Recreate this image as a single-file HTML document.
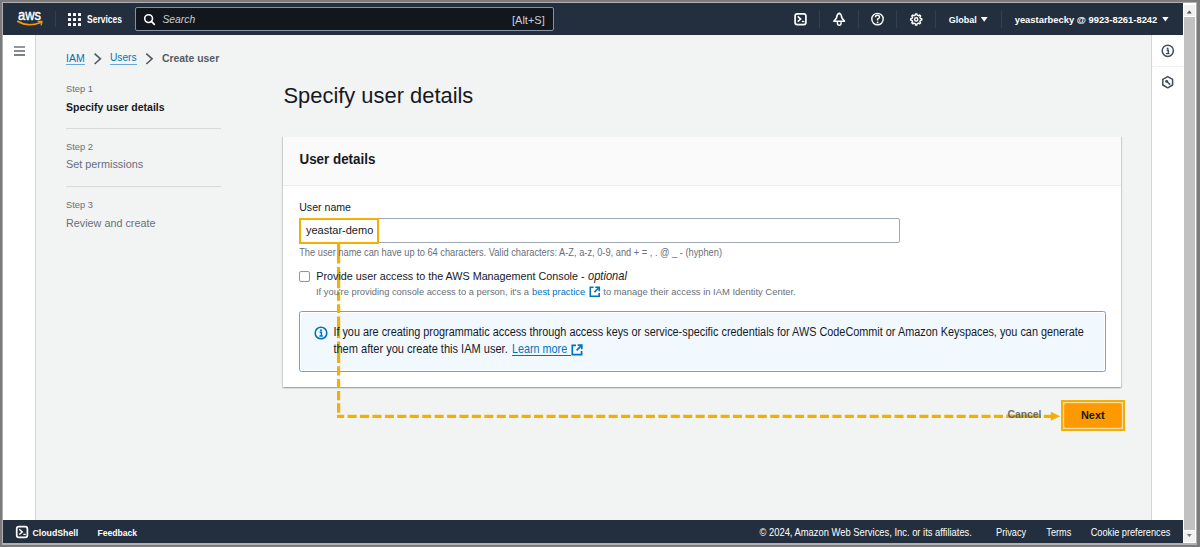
<!DOCTYPE html>
<html><head><meta charset="utf-8">
<style>
*{box-sizing:border-box;margin:0;padding:0}
html,body{width:1200px;height:547px;overflow:hidden}
body{background:#7b7b7d;position:relative;font-family:"Liberation Sans",sans-serif;color:#16191f}
.a{position:absolute}
.t{position:absolute;white-space:nowrap;line-height:0;z-index:2}
.hdr{left:3px;top:3px;width:1180px;height:32px;background:#232f3e}
.ftr{left:3px;top:520px;width:1180px;height:23px;background:#232f3e}
.wt{color:#fff;font-weight:bold}
.div{position:absolute;width:1px;background:#343f4e;top:10px;height:18px}
a{color:#0073bb}
</style></head><body>
<!-- frame -->
<div class="a" style="left:2px;top:2px;width:1195px;height:542.5px;background:#b0afad"></div>
<div class="a" style="left:3px;top:3px;width:1193px;height:540px;background:#f2f3f3"></div>
<!-- scrollbar -->
<div class="a" style="left:1183px;top:3px;width:13px;height:540px;background:#fff"></div>
<div class="a" style="left:1184px;top:5px;width:11px;height:11px;background:#f0f0f0"></div>
<div class="a" style="left:1184.2px;top:17px;width:10.8px;height:513px;background:#c1c1c1"></div>
<div class="a" style="left:1184px;top:531px;width:11px;height:11px;background:#f0f0f0"></div>
<svg class="a" style="left:1183px;top:3px" width="13" height="540"><path d="M3.8 10.5 L6.3 7.5 L8.8 10.5Z" fill="#505050"/><path d="M3.8 531 L6.3 534 L8.8 531Z" fill="#7a7a7a"/></svg>

<!-- left nav -->
<div class="a" style="left:3px;top:35px;width:33px;height:485px;background:#fff;border-right:1px solid #d3d5d9"></div>
<svg class="a" style="left:13px;top:45px" width="14" height="12"><g stroke-width="1.4"><line x1="1" y1="2" x2="12" y2="2" stroke="#666c75"/><line x1="1" y1="6" x2="12" y2="6" stroke="#545b66"/><line x1="1" y1="10" x2="12" y2="10" stroke="#3f4a5a"/></g></svg>

<!-- right panel -->
<div class="a" style="left:1151px;top:35px;width:32px;height:485px;background:#fff;border-left:1px solid #d3d5d9"></div>
<svg class="a" style="left:1152px;top:35px" width="31" height="65">
 <circle cx="15.8" cy="15.8" r="5.6" fill="none" stroke="#414d5c" stroke-width="1.5"/>
 <circle cx="15.6" cy="13.5" r="1" fill="#414d5c"/>
 <path d="M14.7 15.2 H16.3 V18.4" fill="none" stroke="#414d5c" stroke-width="1.5"/><path d="M13.9 18.6 H17.5" fill="none" stroke="#414d5c" stroke-width="1.2"/>
 <line x1="0" y1="31.5" x2="31" y2="31.5" stroke="#e8eaec" stroke-width="1" stroke-dasharray="2 1"/>
 <path d="M15.7 41.6 L20.6 44.4 V50 L15.7 52.8 L10.8 50 V44.4 Z" fill="none" stroke="#414d5c" stroke-width="1.5" stroke-linejoin="round"/>
 <circle cx="14.6" cy="46.3" r="1.5" fill="#414d5c"/>
 <line x1="15" y1="46.7" x2="18.2" y2="49.6" stroke="#414d5c" stroke-width="1.5"/>
</svg>

<!-- header -->
<div class="a hdr"></div>
<svg class="a" style="left:15px;top:8px" width="32" height="22">
 <text x="3" y="11.6" font-family="Liberation Sans" font-size="13" fill="#fff" stroke="#fff" stroke-width="0.35" transform="translate(0 11.6) scale(1 1.18) translate(0 -11.6)" letter-spacing="0">aws</text>
 <path d="M2.6 13.3 Q13 19.6 25.6 14.4" fill="none" stroke="#ff9900" stroke-width="1.6" stroke-linecap="round"/>
 <path d="M23.2 13.3 L27 13.5 L26.2 16.8" fill="none" stroke="#ff9900" stroke-width="1.3" stroke-linecap="round" stroke-linejoin="round"/>
</svg>
<div class="div" style="left:55px;top:11px;height:16px"></div>
<svg class="a" style="left:68px;top:13px" width="13" height="13"><g fill="#fff">
<rect x="0" y="0" width="3" height="3" rx="0.5"/><rect x="5" y="0" width="3" height="3" rx="0.5"/><rect x="10" y="0" width="3" height="3" rx="0.5"/>
<rect x="0" y="5" width="3" height="3" rx="0.5"/><rect x="5" y="5" width="3" height="3" rx="0.5"/><rect x="10" y="5" width="3" height="3" rx="0.5"/>
<rect x="0" y="10" width="3" height="3" rx="0.5"/><rect x="5" y="10" width="3" height="3" rx="0.5"/><rect x="10" y="10" width="3" height="3" rx="0.5"/></g></svg>
<div class="t wt" style="left:87px;top:20px;font-size:8.5px;transform-origin:0 0.3465em;transform:scaleY(1.2)">Services</div>

<div class="a" style="left:135px;top:7px;width:419px;height:24px;background:#12171e;border:1px solid #8592a2;border-radius:2px"></div>
<svg class="a" style="left:143px;top:13px" width="13" height="13"><circle cx="5.6" cy="5.6" r="3.9" fill="none" stroke="#fff" stroke-width="1.6"/><line x1="8.4" y1="8.4" x2="11.3" y2="11.3" stroke="#fff" stroke-width="1.7" stroke-linecap="round"/></svg>
<div class="t" style="left:162.5px;top:20px;font-size:10.3px;font-style:italic;color:#c9cfd6">Search</div>
<div class="t" style="left:512px;top:20px;font-size:11px;color:#c9cfd6">[Alt+S]</div>

<svg class="a" style="left:790px;top:8px" width="140" height="22">
 <rect x="5.1" y="5.8" width="10.8" height="10.8" rx="2.2" fill="none" stroke="#fff" stroke-width="1.7"/>
 <path d="M7.7 8.4 L10.7 11.1 L7.7 13.6" fill="none" stroke="#fff" stroke-width="1.5"/>
 <line x1="11.9" y1="13.5" x2="14.3" y2="13.5" stroke="#fff" stroke-width="1.3"/>
 <path d="M49.2 5.1 C47.6 5.9 46.7 7.5 46.5 10 L43.9 13.3 H54.5 L51.9 10 C51.7 7.5 50.8 5.9 49.2 5.1 Z" fill="none" stroke="#fff" stroke-width="1.6" stroke-linejoin="round"/>
 <path d="M47.4 13.8 V15.3 Q47.4 17.3 49.25 17.3 Q51.1 17.3 51.1 15.3 V13.8" fill="none" stroke="#fff" stroke-width="1.4"/>
 <circle cx="87.5" cy="11.1" r="5.7" fill="none" stroke="#fff" stroke-width="1.4"/>
 <path d="M85.5 9.3 Q85.5 7.2 87.5 7.2 Q89.5 7.2 89.5 9.1 Q89.5 10.4 87.6 11.1 V12.6" fill="none" stroke="#fff" stroke-width="1.4"/>
 <circle cx="87.6" cy="14.4" r="0.9" fill="#fff"/>
 <g transform="translate(126.2 11.4)">
 <path d="M4.20 -0.94 L5.55 -0.73 L5.55 0.73 L4.20 0.94 L3.63 2.30 L4.44 3.41 L3.41 4.44 L2.30 3.63 L0.94 4.20 L0.73 5.55 L-0.73 5.55 L-0.94 4.20 L-2.30 3.63 L-3.41 4.44 L-4.44 3.41 L-3.63 2.30 L-4.20 0.94 L-5.55 0.73 L-5.55 -0.73 L-4.20 -0.94 L-3.63 -2.30 L-4.44 -3.41 L-3.41 -4.44 L-2.30 -3.63 L-0.94 -4.20 L-0.73 -5.55 L0.73 -5.55 L0.94 -4.20 L2.30 -3.63 L3.41 -4.44 L4.44 -3.41 L3.63 -2.30Z" fill="none" stroke="#fff" stroke-width="1.4" stroke-linejoin="round"/>
 <circle cx="0" cy="0" r="1.6" fill="none" stroke="#fff" stroke-width="1.4"/>
 </g>
</svg>
<div class="div" style="left:819px"></div>
<div class="div" style="left:858px"></div>
<div class="div" style="left:896px"></div>
<div class="div" style="left:935px"></div>
<div class="div" style="left:1001px"></div>
<div class="t wt" style="left:948.7px;top:20px;font-size:9px;transform-origin:0 0.3465em;transform:scaleY(1.08)">Global</div>
<svg class="a" style="left:980px;top:16px" width="9" height="7"><path d="M0.8 1 H7.6 L4.2 5.8Z" fill="#fff"/></svg>
<div class="t wt" style="left:1014.7px;top:20px;font-size:9.4px;transform-origin:0 0.3465em;transform:scaleY(1.03)">yeastarbecky @ 9923-8261-8242</div>
<svg class="a" style="left:1161px;top:16px" width="9" height="7"><path d="M1.2 1 H7.6 L4.4 5.6Z" fill="#fff"/></svg>

<!-- footer -->
<div class="a ftr"></div>
<svg class="a" style="left:15px;top:524.5px" width="14" height="14"><rect x="1.7" y="1.7" width="10.7" height="10.7" rx="2.2" fill="none" stroke="#fff" stroke-width="1.7"/><path d="M4.3 4.3 L7.2 7 L4.3 9.5" fill="none" stroke="#fff" stroke-width="1.5"/><line x1="8.4" y1="9.4" x2="10.8" y2="9.4" stroke="#fff" stroke-width="1.3"/></svg>
<div class="t wt" style="left:32.5px;top:533px;font-size:8.75px;transform-origin:0 0.3465em;transform:scaleY(1.1)">CloudShell</div>
<div class="t wt" style="left:97.5px;top:533px;font-size:8.6px;transform-origin:0 0.3465em;transform:scaleY(1.1)">Feedback</div>
<div class="t wt" style="left:759.5px;top:533px;font-size:9.4px;font-weight:normal;transform-origin:0 0.3465em;transform:scaleY(1.12)">© 2024, Amazon Web Services, Inc. or its affiliates.</div>
<div class="t wt" style="left:996px;top:533px;font-size:9.2px;font-weight:normal;transform-origin:0 0.3465em;transform:scaleY(1.1)">Privacy</div>
<div class="t wt" style="left:1046.3px;top:533px;font-size:9.2px;font-weight:normal;transform-origin:0 0.3465em;transform:scaleY(1.1)">Terms</div>
<div class="t wt" style="left:1090.7px;top:533px;font-size:9.2px;font-weight:normal;transform-origin:0 0.3465em;transform:scaleY(1.1)">Cookie preferences</div>

<!-- breadcrumbs -->
<div class="t" style="left:66px;top:58px;font-size:10.5px;color:#0073bb;transform-origin:0 0.3465em;transform:scaleY(1.07)">IAM</div>
<div class="t" style="left:110px;top:58px;font-size:10.2px;color:#0073bb;transform-origin:0 0.3465em;transform:scaleY(1.07)">Users</div>
<div class="a" style="left:66px;top:64.2px;width:19px;height:1.2px;background:#6aa8dc"></div>
<div class="a" style="left:110px;top:64.2px;width:27px;height:1.2px;background:#6aa8dc"></div>
<svg class="a" style="left:92px;top:52px" width="64" height="14"><path d="M2.6 1.6 L8.4 6.8 L2.6 12" fill="none" stroke="#545b64" stroke-width="1.6"/><path d="M54.3 1.6 L60.1 6.8 L54.3 12" fill="none" stroke="#545b64" stroke-width="1.6"/></svg>
<div class="t" style="left:162px;top:58.6px;font-size:10.4px;color:#545b64;font-weight:bold;transform-origin:0 0.3465em;transform:scaleY(1.07)">Create user</div>

<!-- steps -->
<div class="t" style="left:66px;top:89px;font-size:9.3px;color:#687078;transform-origin:0 0.3465em;transform:scaleY(1.03)">Step 1</div>
<div class="t" style="left:66px;top:106.5px;font-size:10.5px;font-weight:bold;color:#16191f;transform-origin:0 0.3465em;transform:scaleY(1.05)">Specify user details</div>
<div class="a" style="left:66px;top:128px;width:155px;height:1px;background:#d5dbdb"></div>
<div class="t" style="left:66px;top:146.6px;font-size:9.3px;color:#687078;transform-origin:0 0.3465em;transform:scaleY(1.03)">Step 2</div>
<div class="t" style="left:66px;top:164.3px;font-size:10.85px;color:#687078;transform-origin:0 0.3465em;transform:scaleY(1.08)">Set permissions</div>
<div class="a" style="left:66px;top:186px;width:155px;height:1px;background:#d5dbdb"></div>
<div class="t" style="left:66px;top:204.8px;font-size:9.3px;color:#687078;transform-origin:0 0.3465em;transform:scaleY(1.03)">Step 3</div>
<div class="t" style="left:66px;top:223px;font-size:10.8px;color:#687078;transform-origin:0 0.3465em;transform:scaleY(1.08)">Review and create</div>

<!-- heading -->
<div class="t" style="left:283.5px;top:96.3px;font-size:21.9px;color:#16191f">Specify user details</div>

<!-- panel -->
<div class="a" style="left:283px;top:136px;width:838px;height:251px;background:#fff;box-shadow:0 1px 1.5px 0 rgba(0,28,36,.25),1px 1px 1px 0 rgba(0,28,36,.1),-1px 1px 1px 0 rgba(0,28,36,.1);border-top:1px solid #f3f4f4"></div>
<div class="a" style="left:283px;top:137px;width:838px;height:49px;background:#fafafa;border-bottom:1px solid #eaeded"></div>
<div class="t" style="left:299.5px;top:159.5px;font-size:13.4px;font-weight:bold;color:#16191f;transform-origin:0 0.3465em;transform:scaleY(1.08)">User details</div>
<div class="t" style="left:299.2px;top:206.5px;font-size:10.6px;color:#16191f">User name</div>
<div class="a" style="left:299px;top:218px;width:601px;height:25.4px;background:#fff;border:1px solid #9ea9b6;border-bottom-width:1.3px;border-radius:2px"></div>
<div class="t" style="left:306px;top:230px;font-size:11px;color:#16191f;transform-origin:0 0.3465em;transform:scaleY(1.05)">yeastar-demo</div>
<div class="t" style="left:299.2px;top:252.5px;font-size:9.27px;color:#687078;transform-origin:0 0.3465em;transform:scaleY(1.1)">The user name can have up to 64 characters. Valid characters: A-Z, a-z, 0-9, and + = , . @ _ - (hyphen)</div>
<div class="a" style="left:299px;top:271px;width:11px;height:11px;border:1.3px solid #8c96a5;border-radius:2px;background:#fff"></div>
<div class="t" style="left:316.3px;top:275.8px;font-size:10.77px;color:#16191f;transform-origin:0 0.3465em;transform:scaleY(1.1)">Provide user access to the AWS Management Console -</div>
<div class="t" style="left:588px;top:275.8px;font-size:11.1px;font-style:italic;color:#16191f;transform-origin:0 0.3465em;transform:scaleY(1.08)">optional</div>
<div class="t" style="left:316px;top:291.5px;font-size:9.33px;color:#687078">If you're providing console access to a person, it's a</div>
<div class="t" style="left:532px;top:291.5px;font-size:9.38px;color:#0073bb">best practice</div>
<svg class="a" style="left:589px;top:286px" width="12" height="12"><path d="M4.6 1.3 H1.3 V10.2 H10.2 V6.9" fill="none" stroke="#0073bb" stroke-width="1.6"/><path d="M6.3 1.2 H10.3 V5.2 M10.3 1.2 L5.4 6.1" fill="none" stroke="#0073bb" stroke-width="1.6"/></svg>
<div class="t" style="left:603.3px;top:291.5px;font-size:9.41px;color:#687078">to manage their access in IAM Identity Center.</div>

<div class="a" style="left:298.5px;top:310.5px;width:807.5px;height:61.5px;background:#f1f9ff;border:1.4px solid #62a8dc;border-radius:2.5px;box-shadow:inset 0 0 0 1px #fff"></div>
<svg class="a" style="left:313px;top:325px" width="16" height="16"><circle cx="8" cy="8" r="5.8" fill="none" stroke="#0073bb" stroke-width="1.6"/><circle cx="8" cy="5.2" r="1" fill="#0073bb"/><path d="M6.6 7.3 H8.4 V11 M6.4 11 H9.8" fill="none" stroke="#0073bb" stroke-width="1.5"/></svg>
<div class="t" style="left:333.4px;top:331.8px;font-size:10.87px;color:#16191f;transform-origin:0 0.3465em;transform:scaleY(1.15)">If you are creating programmatic access through access keys or service-specific credentials for AWS CodeCommit or Amazon Keyspaces, you can generate</div>
<div class="t" style="left:333.4px;top:349.2px;font-size:11.06px;color:#16191f;transform-origin:0 0.3465em;transform:scaleY(1.1)">them after you create this IAM user.</div>
<div class="t" style="left:512px;top:349.2px;font-size:10.8px;color:#0073bb;transform-origin:0 0.3465em;transform:scaleY(1.1)">Learn more</div>
<div class="a" style="left:512px;top:354.6px;width:58.5px;height:1px;background:#0073bb"></div>
<svg class="a" style="left:571px;top:343.5px" width="13" height="12"><path d="M5 1.3 H1.3 V10.6 H10.6 V7" fill="none" stroke="#0073bb" stroke-width="1.7"/><path d="M6.7 1.2 H10.8 V5.3 M10.8 1.2 L5.7 6.3" fill="none" stroke="#0073bb" stroke-width="1.7"/></svg>

<!-- buttons -->
<div class="t" style="z-index:4;opacity:.85;left:1007.5px;top:415px;font-size:10.3px;font-weight:bold;color:#545b64;transform-origin:0 0.3465em;transform:scaleY(1.1)">Cancel</div>
<div class="a" style="left:1063.5px;top:402.5px;width:58.5px;height:25.6px;background:#ff9900;border-radius:2px"></div>
<div class="t" style="left:1081px;top:414.5px;font-size:10.9px;font-weight:bold;color:#16191f">Next</div>

<!-- annotations -->
<div class="a" style="left:298.5px;top:217.5px;width:80px;height:26px;border:2.5px solid #f4af05"></div>
<div class="a" style="left:1061px;top:400px;width:64px;height:31px;border:2.6px solid #f4af05;box-shadow:inset 0 0 0 1.5px rgba(240,200,100,.55)"></div>
<svg class="a" style="left:0;top:0;z-index:1" width="1200" height="547">
 <path d="M338.6 243.3 V263.6 M338.6 267.1 V288.3 M338.6 292 V300.8 M338.6 304.3 V313.1 M338.6 316.4 V338.3 M338.6 341.5 V362.9 M338.6 366.3 V375.6 M338.6 378.9 V387.9 M338.6 391 V400.2 M338.6 403.2 V412.7" fill="none" stroke="#f4af05" stroke-width="3.2"/>
</svg>
<svg class="a" style="left:0;top:0;z-index:3" width="1200" height="547">
 <path d="M337 416.3 H1052" fill="none" stroke="#f4af05" stroke-width="3.3" stroke-dasharray="9 3.43" stroke-dashoffset="1.8"/>
 <path d="M1006.4 416.3 H1040.3" fill="none" stroke="#f4af05" stroke-width="3.3"/>
 <path d="M1050.8 411.8 L1060.2 416.3 L1050.8 420.8Z" fill="#f4af05"/>
</svg>
</body></html>
